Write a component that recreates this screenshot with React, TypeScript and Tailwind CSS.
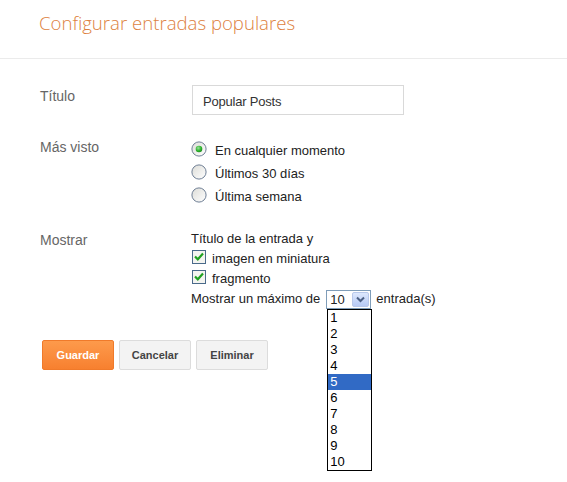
import { useState } from 'react'

const RANGES = ['En cualquier momento', 'Últimos 30 días', 'Última semana']
const COUNTS = ['1', '2', '3', '4', '5', '6', '7', '8', '9', '10']

function Radio({ checked }: { checked: boolean }) {
  return (
    <svg width="16" height="16" viewBox="0 0 16 16" className="shrink-0">
      <defs>
        <linearGradient id="rbg" x1="0" y1="0" x2="1" y2="1">
          <stop offset="0" stopColor="#dcdcd7" />
          <stop offset="1" stopColor="#ffffff" />
        </linearGradient>
        <radialGradient id="rdot" cx="0.4" cy="0.35" r="0.7">
          <stop offset="0" stopColor="#9be09b" />
          <stop offset="0.6" stopColor="#2fb32f" />
          <stop offset="1" stopColor="#1a8a1a" />
        </radialGradient>
      </defs>
      <circle cx="8" cy="8" r="7.1" fill="url(#rbg)" stroke="#6f7f95" strokeWidth="1" />
      {checked && <circle cx="8" cy="8" r="3.3" fill="url(#rdot)" />}
    </svg>
  )
}

function Checkbox() {
  return (
    <svg width="14" height="14" viewBox="0 0 14 14" className="shrink-0">
      <rect x="0.5" y="0.5" width="13" height="13" fill="#f4f4f0" stroke="#4a6a8a" strokeWidth="1" />
      <path d="M3 6.5 L5.8 9.3 L11 3.6" fill="none" stroke="#21a121" strokeWidth="2.2" />
    </svg>
  )
}

export default function App() {
  const [range, setRange] = useState(0)

  return (
    <div className="relative h-[482px] w-[567px] overflow-hidden bg-white font-['Liberation_Sans',Arial,sans-serif]">
      {/* Header */}
      <div className="h-[59px] border-b border-[#ebebeb] pl-[39px] pt-[9px]">
        <h1 className="font-['Open_Sans',sans-serif] text-[18.6px] font-light leading-[28px] text-[#dd7f3e]">
          Configurar entradas populares
        </h1>
      </div>

      <div className="pl-[40px] pt-[26px]">
        {/* Título */}
        <div className="flex">
          <div className="w-[152px] pt-[3px] text-[14px] leading-[16px] text-[#666]">Título</div>
          <div className="flex h-[30px] w-[212px] items-center border border-[#d9d9d9] pl-[10px] pt-[3px] text-[13px] tracking-[-0.2px] text-[#333]">
            Popular Posts
          </div>
        </div>

        {/* Más visto */}
        <div className="mt-[24px] flex">
          <div className="w-[151px] text-[14px] leading-[16px] text-[#666]">Más visto</div>
          <div className="flex flex-col">
            {RANGES.map((label, i) => (
              <div
                key={label}
                className="flex h-[23px] cursor-pointer items-center text-[13px] text-[#222]"
                onClick={() => setRange(i)}
              >
                <span className="mb-[4px] mr-[8px]">
                  <Radio checked={range === i} />
                </span>
                {label}
              </div>
            ))}
          </div>
        </div>

        {/* Mostrar */}
        <div className="mt-[21px] flex">
          <div className="w-[151px] pt-[3px] text-[14px] leading-[16px] text-[#666]">Mostrar</div>
          <div className="flex flex-col text-[13px] leading-[20px] text-[#222]">
            <div className="h-[20px]">Título de la entrada y</div>
            <div className="flex h-[20px] items-start">
              <span className="ml-[1px] mr-[6px] mt-[1px]">
                <Checkbox />
              </span>
              imagen en miniatura
            </div>
            <div className="flex h-[20px] items-start">
              <span className="ml-[1px] mr-[6px] mt-[1px]">
                <Checkbox />
              </span>
              fragmento
            </div>
            <div className="flex h-[20px] items-start">
              <span>Mostrar un máximo de</span>
              <div className="relative ml-[6px] mt-[1px]">
                <div className="flex h-[19px] w-[45px] items-center justify-between border border-[#7f9db9] bg-white">
                  <span className="pl-[3px] text-[13px] leading-[17px]">10</span>
                  <span className="mr-[1px] flex h-[15px] w-[17px] items-center justify-center rounded-[2px] border border-[#b8c8ea] bg-gradient-to-b from-[#dde8fd] to-[#b7caf5]">
                    <svg width="9" height="7" viewBox="0 0 9 7">
                      <path d="M1 1.5 L4.5 5 L8 1.5" fill="none" stroke="#4d6185" strokeWidth="2" />
                    </svg>
                  </span>
                </div>

                {/* Open list */}
                <div className="absolute left-[1px] top-[19px] z-10 w-[45px] border border-black bg-white">
                  {COUNTS.map((n) => (
                    <div
                      key={n}
                      className={
                        n === '5'
                          ? 'h-[16px] bg-[#316ac5] pl-[2px] text-[13px] leading-[16px] text-white'
                          : 'h-[16px] pl-[2px] text-[13px] leading-[16px] text-black'
                      }
                    >
                      {n}
                    </div>
                  ))}
                </div>
              </div>
              <span className="ml-[5px]">entrada(s)</span>
            </div>
          </div>
        </div>

        {/* Buttons */}
        <div className="ml-[2px] mt-[31px] flex gap-[5px] text-[11px] font-bold">
          <button className="h-[30px] w-[72px] rounded-[2px] border border-[#f07a2a] bg-gradient-to-b from-[#fd9a4b] to-[#f7802f] text-white">
            Guardar
          </button>
          <button className="h-[30px] w-[72px] rounded-[2px] border border-[#dcdcdc] bg-[#f3f3f3] text-[#444]">
            Cancelar
          </button>
          <button className="h-[30px] w-[72px] rounded-[2px] border border-[#dcdcdc] bg-[#f3f3f3] text-[#444]">
            Eliminar
          </button>
        </div>
      </div>
    </div>
  )
}
